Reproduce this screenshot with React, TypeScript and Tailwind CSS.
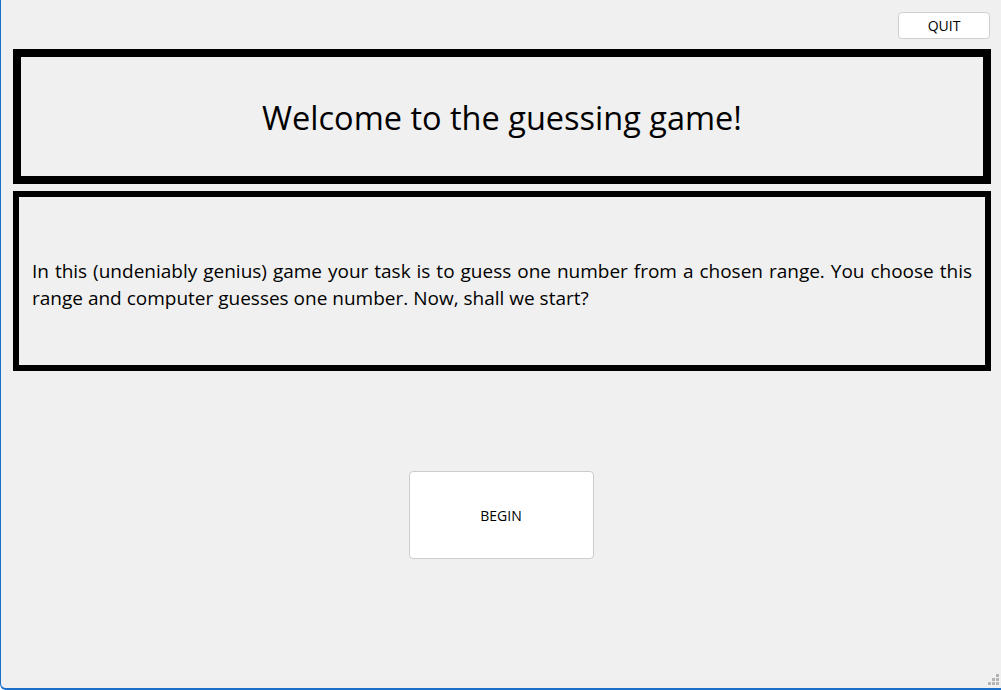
import React from 'react';

const font = { fontFamily: '"Open Sans", "Noto Sans", sans-serif' };

const ResizeGrip: React.FC = () => (
  <div className="absolute right-[2px] bottom-[3px] grid grid-cols-3 gap-[1px]">
    {[0, 0, 1, 0, 1, 1, 1, 1, 1].map((on, i) => (
      <div key={i} className={on ? 'h-[3px] w-[3px] bg-[#b4b4b4]' : 'h-[3px] w-[3px]'} />
    ))}
  </div>
);

const App: React.FC = () => {
  return (
    <div
      className="relative h-[690px] w-[1001px] overflow-hidden rounded-bl-[6px] border-b-2 border-l border-[#1a6fc9] bg-[#f0f0f0] text-black"
      style={font}
    >
      <div className="flex flex-col pl-[12px] pr-[10px] pt-[12px]">
        {/* quit */}
        <div className="flex justify-end pr-px">
          <button className="h-[27px] w-[92px] rounded-[4px] border border-[#d0d0d0] bg-white text-[14px] leading-none">
            QUIT
          </button>
        </div>

        {/* title */}
        <div className="mt-[10px] flex h-[135px] items-center justify-center border-[8px] border-black pt-[4px]">
          <h1 className="text-[32.5px] leading-none">Welcome to the guessing game!</h1>
        </div>

        {/* description */}
        <div className="mt-[7px] flex h-[180px] items-center border-[6px] border-black px-[13px] pt-[8px]">
          <p className="text-justify text-[19px] leading-[27px]">
            In this (undeniably genius) game your task is to guess one number from a chosen range. You choose this
            range and computer guesses one number. Now, shall we start?
          </p>
        </div>

        {/* begin */}
        <div className="mt-[100px] flex justify-center pr-[2px]">
          <button className="h-[88px] w-[185px] rounded-[4px] border border-[#cccccc] bg-white text-[14px]">
            BEGIN
          </button>
        </div>
      </div>
      <ResizeGrip />
    </div>
  );
};

export default App;
